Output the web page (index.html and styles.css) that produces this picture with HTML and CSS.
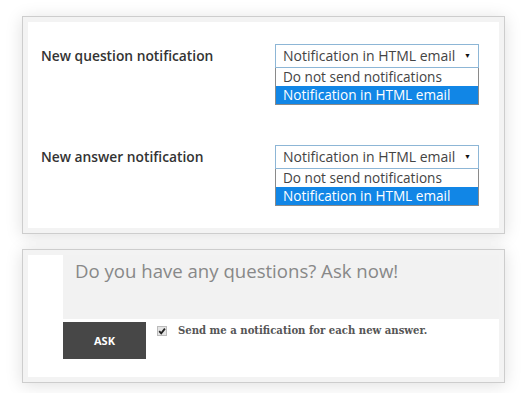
FILE: index.html
```html
<!DOCTYPE html>
<html lang="en">
<head>
  <meta charset="UTF-8" />
  <title>Notifications</title>
  <link rel="stylesheet" href="styles.css">
</head>
<body>
  <div class="panel">
    <div class="panel-inner settings">
      <div class="setting">
        <span class="setting-label">New question notification</span>
        <div class="dropdown">
          <div class="select">Notification in HTML email<span class="arrow">&#9660;</span></div>
          <div class="options">
            <div class="option">Do not send notifications</div>
            <div class="option selected">Notification in HTML email</div>
          </div>
        </div>
      </div>
      <div class="setting second">
        <span class="setting-label">New answer notification</span>
        <div class="dropdown">
          <div class="select">Notification in HTML email<span class="arrow">&#9660;</span></div>
          <div class="options">
            <div class="option">Do not send notifications</div>
            <div class="option selected">Notification in HTML email</div>
          </div>
        </div>
      </div>
    </div>
  </div>

  <div class="panel">
    <div class="panel-inner ask-form">
      <div class="question">Do you have any questions? Ask now!</div>
      <div class="ask-row">
        <button class="ask-btn">ASK</button>
        <span class="check">
          <svg width="8" height="8" viewBox="0 0 8 8"><path d="M1.2 4.2 L3.2 6.3 L6.9 1.6" fill="none" stroke="#222" stroke-width="1.8"/></svg>
        </span>
        <span class="check-label">Send me a notification for each new answer.</span>
      </div>
    </div>
  </div>
</body>
</html>
```

FILE: styles.css
```css
body {
  margin: 0;
  padding: 16px 20px 0 22px;
  background: #fff;
  font-family: "Open Sans", "Liberation Sans", sans-serif;
}
.panel {
  width: 471px;
  border: 1px solid #cdcdcd;
  padding: 5px;
  background: #f3f3f3;
  box-shadow: 0 2px 16px rgba(0,0,0,0.13);
  margin-bottom: 15px;
}
.panel-inner {
  background: #fff;
}
.settings {
  padding: 22px 0 22px 13px;
}
.setting {
  display: flex;
  align-items: flex-start;
}
.setting.second {
  margin-top: 40px;
}
.setting-label {
  width: 234px;
  line-height: 24px;
  font-size: 13.8px;
  font-weight: 600;
  color: #333;
}
.dropdown {
  width: 204px;
}
.select {
  height: 22px;
  line-height: 22px;
  border: 1px solid #8db6d6;
  padding: 0 7px 0 7px;
  font-size: 14px;
  color: #444;
  display: flex;
  justify-content: space-between;
}
.arrow {
  font-size: 7px;
  color: #111;
}
.options {
  border: 1px solid #8a8a8a;
  border-top: none;
}
.option {
  height: 18px;
  line-height: 18px;
  padding-left: 7px;
  font-size: 13.6px;
  color: #444;
}
.option.selected {
  background: #1186e6;
  color: #fff;
}
.ask-form {
  padding: 0 0 18px 35px;
}
.question {
  height: 64px;
  background: #f2f2f2;
  padding: 4px 12px 0;
  box-sizing: border-box;
  font-size: 18.6px;
  line-height: 24px;
  color: #888;
}
.ask-row {
  display: flex;
  align-items: flex-start;
  margin-top: 3px;
}
.ask-btn {
  width: 83px;
  height: 37px;
  border: none;
  background: #474747;
  color: #fff;
  font-family: "Open Sans", sans-serif;
  font-weight: 700;
  font-size: 11px;
}
.check {
  width: 8px;
  height: 8px;
  margin: 4px 0 0 11px;
  background: #e4e4e4;
  border: 1px solid #bbb;
  display: flex;
}
.check-label {
  margin: 3px 0 0 11px;
  font-family: "DejaVu Serif", serif;
  font-weight: 700;
  font-size: 10.1px;
  color: #555;
}
```
